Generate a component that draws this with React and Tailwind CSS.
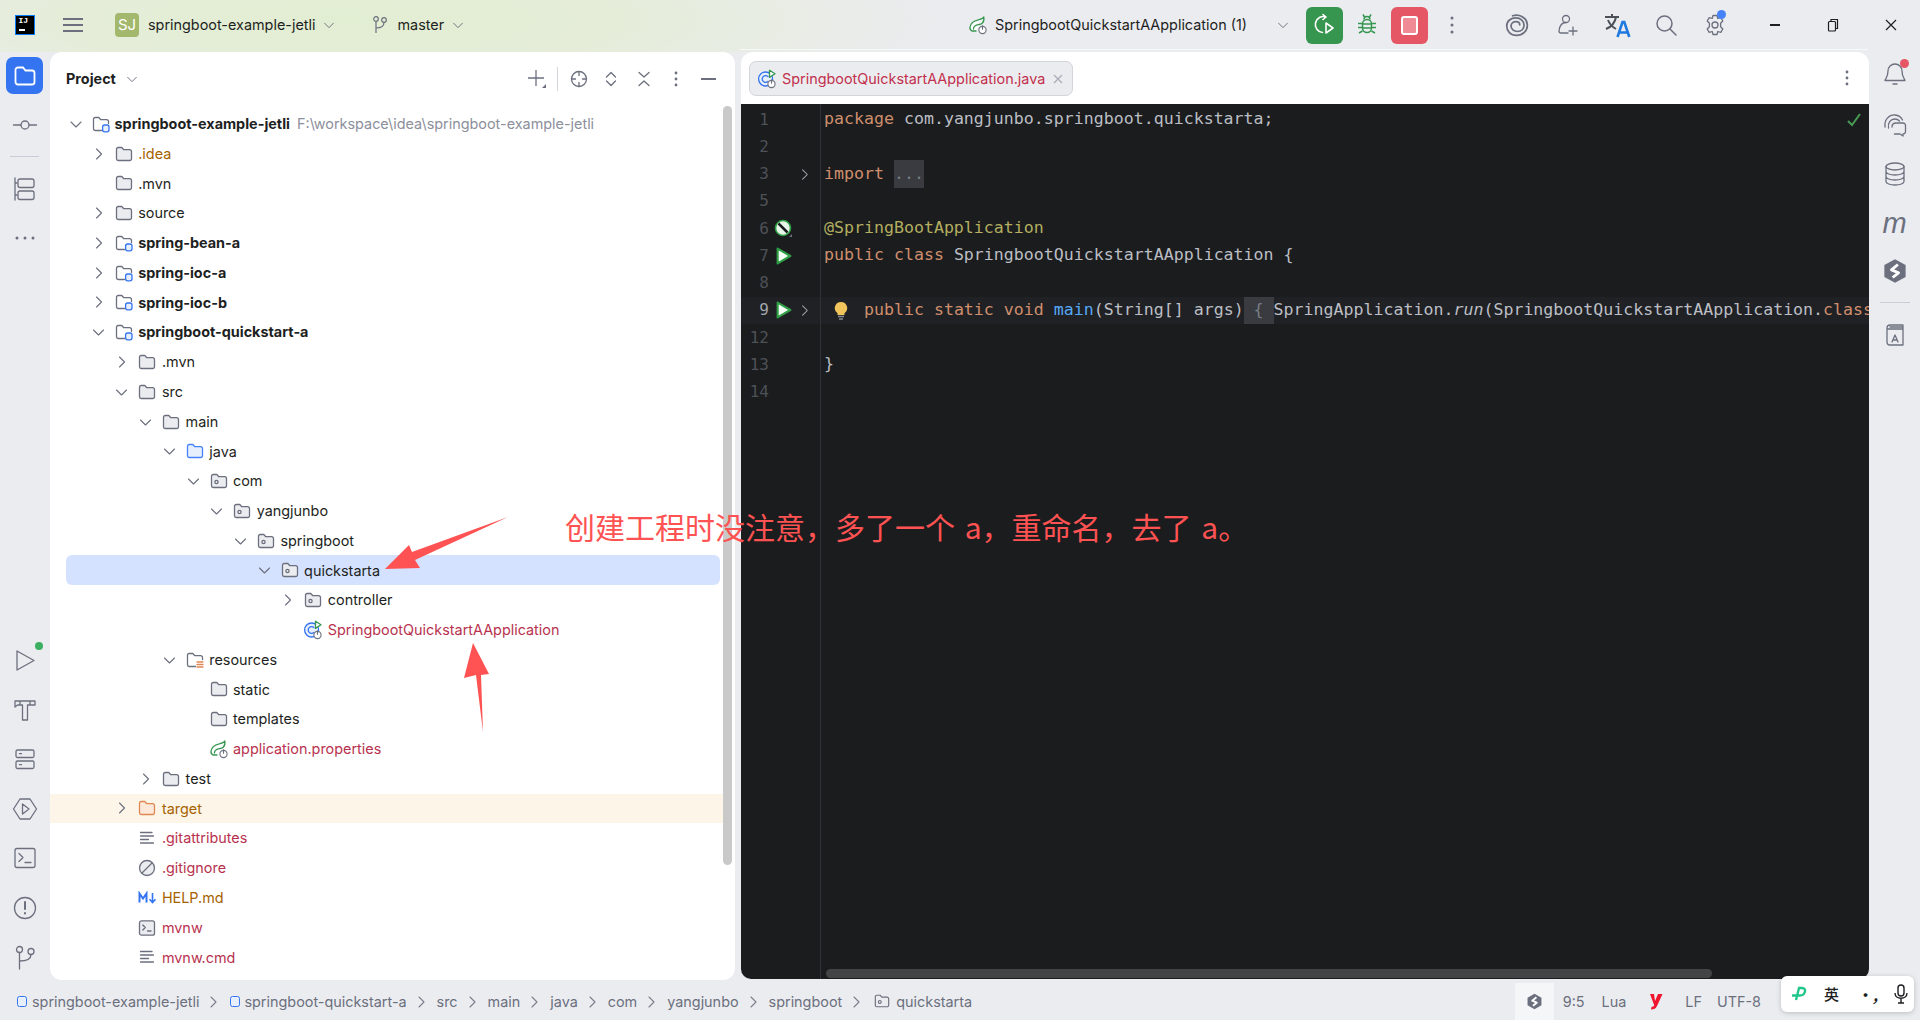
import React from 'react';

const G = '#6c707e';
const Svg = ({ s = 20, vb = 20, children, className = '', stroke = G, sw = 1.3 }) => (
  <svg width={s} height={s} viewBox={`0 0 ${vb} ${vb}`} fill="none" stroke={stroke} strokeWidth={sw} strokeLinecap="round" strokeLinejoin="round" className={`shrink-0 ${className}`}>{children}</svg>
);

const folderD = 'M1.5 4.2A1.7 1.7 0 0 1 3.2 2.5h3.6l2 2.2h5.9a1.8 1.8 0 0 1 1.8 1.8v7.2a1.8 1.8 0 0 1-1.8 1.8H3.2a1.7 1.7 0 0 1-1.7-1.7z';
const Folder = ({ kind }) => {
  if (kind === 'target') return <Svg s={18} vb={18} stroke="#e08855"><path d={folderD} fill="#fde9d9" /></Svg>;
  if (kind === 'module') return (
    <Svg s={18} vb={18}><path d="M9.5 15.5H3.2a1.7 1.7 0 0 1-1.7-1.7V4.2A1.7 1.7 0 0 1 3.2 2.5h3.6l2 2.2h5.9a1.8 1.8 0 0 1 1.8 1.8v2" fill="#fff" /><rect x="10.6" y="10" width="6.4" height="6.8" rx="2" stroke="#3574f0" fill="#e7effd" /></Svg>
  );
  if (kind === 'res') return (
    <Svg s={18} vb={18}><path d="M9.5 15.5H3.2a1.7 1.7 0 0 1-1.7-1.7V4.2A1.7 1.7 0 0 1 3.2 2.5h3.6l2 2.2h5.9a1.8 1.8 0 0 1 1.8 1.8v2" fill="#fff" /><path d="M11 11h6M11 13.5h6M11 16h6" stroke="#e08855" /></Svg>
  );
  if (kind === 'src') return <Svg s={18} vb={18} stroke="#4682fa"><path d={folderD} fill="#e7effd" /></Svg>;
  if (kind === 'pkg') return <Svg s={18} vb={18}><path d={folderD} fill="#ebecf0" /><circle cx="6.5" cy="10" r="1.6" /></Svg>;
  return <Svg s={18} vb={18}><path d={folderD} fill="#ebecf0" /></Svg>;
};

const Power = ({ x, y }) => (
  <g stroke={G} strokeWidth="1.1"><circle cx={x} cy={y} r="3.6" fill="#fff" /><path d={`M${x} ${y - 4.2}v3.4`} /></g>
);
const JavaIcon = () => (
  <Svg s={20} vb={20} stroke="#3574f0">
    <circle cx="8.6" cy="10" r="7" fill="#e7effd" />
    <path d="M11 7.6a3.4 3.4 0 1 0 0 4.8" />
    <path d="M12.5 1.2l5.5 3.6-5.5 3.6z" fill="#fff" stroke="#369650" />
    <Power x={14.5} y={15} />
  </Svg>
);
const SpringIcon = () => (
  <Svg s={20} vb={20} stroke="#369650">
    <path d="M15.8 2c.5 3-.2 5-1.6 6.3-1.8 1.7-5 1-7 2.4-1.2.9-1.8 2-1.8 3.3M15.8 2c-.7 1.7-3 2.2-5.5 2.9C6 6 2.4 8.600 2 12.200c-.2 1.500.5 3 2 3.800h4" fill="#fff" />
    <Power x={14.5} y={15} />
  </Svg>
);
const Lines = () => (
  <Svg s={18} vb={18}><path d="M2.500 3.500h11.500M2.500 7h13M2.500 10.500h8M2.500 14h13" /></Svg>
);
const Ignore = () => (
  <Svg s={18} vb={18}><circle cx="9" cy="9" r="7.500" fill="#ebecf0" /><path d="M4 14L14 4" /></Svg>
);
const Md = () => (
  <svg width="19" height="14" viewBox="0 0 19 14" className="shrink-0" fill="none">
    <path d="M1.500 11.500v-9l3.500 5 3.500-5v9" stroke="#3574f0" strokeWidth="2" />
    <path d="M14.500 2v9M11.500 8.200l3 3.300 3-3.300" stroke="#3574f0" strokeWidth="1.600" />
  </svg>
);
const Term = () => (
  <Svg s={18} vb={18}><rect x="1.500" y="1.800" width="15" height="14.400" rx="2" fill="#ebecf0" /><path d="M4.800 6l2.500 2.500-2.500 2.500M9.500 12h3.500" /></Svg>
);
const ChevR = ({ s = 16, c = G }) => <Svg s={s} vb={16} stroke={c} sw={1.1}><path d="M6 3l5 5-5 5" /></Svg>;
const ChevD = ({ s = 16, c = G }) => <Svg s={s} vb={16} stroke={c} sw={1.1}><path d="M3 6l5 5 5-5" /></Svg>;

const RED = 'text-[#b8324f]';
const BROWN = 'text-[#a66200]';
const tree = [
  { d: 0, open: true, i: 'module', t: 'springboot-example-jetli', b: true, path: 'F:\\workspace\\idea\\springboot-example-jetli' },
  { d: 1, ch: true, i: 'f', t: '.idea', c: BROWN },
  { d: 1, i: 'f', t: '.mvn' },
  { d: 1, ch: true, i: 'f', t: 'source' },
  { d: 1, ch: true, i: 'module', t: 'spring-bean-a', b: true },
  { d: 1, ch: true, i: 'module', t: 'spring-ioc-a', b: true },
  { d: 1, ch: true, i: 'module', t: 'spring-ioc-b', b: true },
  { d: 1, open: true, i: 'module', t: 'springboot-quickstart-a', b: true },
  { d: 2, ch: true, i: 'f', t: '.mvn' },
  { d: 2, open: true, i: 'f', t: 'src' },
  { d: 3, open: true, i: 'f', t: 'main' },
  { d: 4, open: true, i: 'src', t: 'java' },
  { d: 5, open: true, i: 'pkg', t: 'com' },
  { d: 6, open: true, i: 'pkg', t: 'yangjunbo' },
  { d: 7, open: true, i: 'pkg', t: 'springboot' },
  { d: 8, open: true, i: 'pkg', t: 'quickstarta', sel: true },
  { d: 9, ch: true, i: 'pkg', t: 'controller' },
  { d: 9, i: 'java', t: 'SpringbootQuickstartAApplication', c: RED },
  { d: 4, open: true, i: 'res', t: 'resources' },
  { d: 5, i: 'f', t: 'static' },
  { d: 5, i: 'f', t: 'templates' },
  { d: 5, i: 'spring', t: 'application.properties', c: RED },
  { d: 3, ch: true, i: 'f', t: 'test' },
  { d: 2, ch: true, i: 'target', t: 'target', c: BROWN, tgt: true },
  { d: 2, i: 'lines', t: '.gitattributes', c: RED },
  { d: 2, i: 'ignore', t: '.gitignore', c: RED },
  { d: 2, i: 'md', t: 'HELP.md', c: BROWN },
  { d: 2, i: 'term', t: 'mvnw', c: RED },
  { d: 2, i: 'lines', t: 'mvnw.cmd', c: RED },
];

const rowIcon = (i) => {
  if (i === 'java') return <JavaIcon />;
  if (i === 'spring') return <SpringIcon />;
  if (i === 'lines') return <Lines />;
  if (i === 'ignore') return <Ignore />;
  if (i === 'md') return <Md />;
  if (i === 'term') return <Term />;
  return <Folder kind={i} />;
};

const Row = ({ r }) => (
  <div className={`flex items-center h-[29.77px] whitespace-nowrap ${r.tgt ? 'bg-[#fdf6e8] mr-[9px]' : ''} ${r.sel ? 'bg-[#d4e2ff] rounded-md ml-[16px] mr-[15px]' : ''}`}>
    <div className="flex items-center" style={{ paddingLeft: (r.sel ? 2 : 18) + r.d * 23.7 }}>
      <span className={`w-4 h-4 flex items-center justify-center ${r.d ? '-translate-x-[1.5px]' : ''}`}>
        {r.open ? <ChevD /> : r.ch ? <ChevR /> : null}
      </span>
      <span className={`w-[19px] ml-[7.5px] flex items-center justify-center ${r.d ? '-translate-x-[1px]' : ''}`}>{rowIcon(r.i)}</span>
      <span className={`ml-[4px] ${r.b ? 'font-bold' : ''} ${r.c || 'text-[#1e1f22]'}`}>{r.t}</span>
      {r.path && <span className="ml-[7px] text-[#8c8f9c]">{r.path}</span>}
    </div>
  </div>
);

const Mono = "[font-family:'DejaVu_Sans_Mono',monospace]";
const K = ({ children }) => <span className="text-[#cf8e6d]">{children}</span>;

const RunMark = () => (
  <svg width="16" height="18" viewBox="0 0 15 17" className="shrink-0"><path d="M1.500 1.500L13.500 8.500L1.500 15.500Z" fill="#f4fff6" stroke="#2f9e44" strokeWidth="2" strokeLinejoin="round" /></svg>
);
const BeanMark = () => (
  <svg width="20" height="20" viewBox="0 0 20 20" className="shrink-0">
    <circle cx="9" cy="9" r="7.500" fill="#e8f5e9" stroke="#2f9e44" strokeWidth="1.600" />
    <path d="M4.500 4.500l9 9" stroke="#1a1c1e" strokeWidth="2.500" />
    <path d="M18 15v3h-3z" fill="#6c707e" />
  </svg>
);

const CodeLine = ({ n, active, mark, fold, children }) => (
  <div className={`flex h-[27.25px] items-stretch ${active ? 'bg-[#1f2124]' : ''}`}>
    <div className={`w-[80px] flex items-center border-r border-[#2f3236] shrink-0 ${active ? 'text-[#a1a3ab]' : 'text-[#4e5157]'}`}>
      <span className="w-[28px] text-right text-[16px]">{n}</span>
      <span className="w-[24px] ml-[3px] flex items-center justify-center">
        {mark === 'run' && <RunMark />}
        {mark === 'bean' && <BeanMark />}
      </span>
      {fold && <span className="flex items-center ml-[1px]"><ChevR s={15} c="#a8abb0" /></span>}
    </div>
    <div className="pl-[3px] flex items-center whitespace-pre text-[#bcbec4] min-w-0">{children}</div>
  </div>
);

const RailBtn = ({ children, className = '' }) => (
  <div className={`w-[50px] flex items-center justify-center shrink-0 ${className}`}>{children}</div>
);

const Crumb = ({ children, icon, first }) => (
  <>
    {!first && <span className="mx-[6px] flex items-center"><ChevR s={16} c="#7a7e8a" /></span>}
    <span className="flex items-center whitespace-nowrap">{icon}{children}</span>
  </>
);
const Sq = () => <span className="w-[10px] h-[11px] rounded-[2.500px] border-[1.500px] border-[#3574f0] bg-[#e7effd] mr-[5px] ml-[3px] inline-block" />;

const Hex = ({ s = 22 }) => (
  <svg width={s} height={s} viewBox="0 0 22 22" className="shrink-0">
    <path d="M11 1l9 5v10l-9 5-9-5V6z" fill="#6c707e" />
    <path d="M13.500 5.500L8 10l6 2.500-5 4" fill="none" stroke="#fff" strokeWidth="2.400" strokeLinejoin="round" />
  </svg>
);

export default function App() {
  return (
    <div className="relative w-[1920px] h-[1020px] overflow-hidden bg-[#ebecf0] flex flex-col text-[14.400px] text-[#1e1f22] [font-family:Inter,'Noto_Sans_CJK_SC',sans-serif]">
      {/* Title bar */}
      <header className="relative h-[52px] shrink-0 flex items-center bg-[radial-gradient(ellipse_620px_110px_at_340px_20px,#e2eed2_0%,#e5edd9_45%,#ebecf0_100%)] pb-[2px]">
        <div className="ml-[15px] w-[20px] h-[20px] bg-black border-[1px] border-[#087cfa] relative flex flex-col items-start pl-[2.500px] text-white shrink-0">
          <span className="text-[8px] leading-[10px] font-bold [font-family:'Liberation_Mono',monospace]">IJ</span>
          <span className="w-[6px] h-[1.500px] bg-white mt-[3px]" />
        </div>
        <svg width="20" height="20" viewBox="0 0 20 20" className="ml-[28px] shrink-0" fill="none" stroke={G} strokeWidth="1.800"><path d="M0 4h20M0 10h20M0 16h20" /></svg>
        <div className="ml-[32px] w-[24px] h-[24px] rounded-[4px] bg-[#a3b86c] text-white text-[15px] flex items-center justify-center shrink-0">SJ</div>
        <span className="ml-[9px]">springboot-example-jetli</span>
        <span className="ml-[7px] flex"><ChevD s={14} /></span>
        <svg width="16" height="20" viewBox="0 0 16 20" className="ml-[36px] shrink-0" fill="none" stroke={G} strokeWidth="1.200"><circle cx="4" cy="4" r="2.300" /><circle cx="12" cy="5" r="2.300" /><path d="M4 6.500V18M4 13c5 0 8-1.500 8-5.500" /></svg>
        <span className="ml-[9px]">master</span>
        <span className="ml-[7px] flex"><ChevD s={14} /></span>

        <div className="ml-auto flex items-center">
          <SpringIcon />
          <span className="ml-[7px] w-[281px] whitespace-nowrap">SpringbootQuickstartAApplication (1)</span>
          <ChevD s={14} />
          <div className="ml-[16px] w-[37px] h-[37px] rounded-[6px] bg-[#369650] flex items-center justify-center">
            <svg width="24" height="24" viewBox="0 0 24 24" fill="none" stroke="#fff" strokeWidth="1.600" strokeLinejoin="round" strokeLinecap="round"><path d="M13 4a8 8 0 1 0-3.500 15.500M10 1.500L13 4l-3 2.500" /><path d="M13 10l7 5-7 5z" /></svg>
          </div>
          <div className="w-[48px] flex justify-center">
            <svg width="22" height="24" viewBox="0 0 22 24" fill="none" stroke="#369650" strokeWidth="1.500"><rect x="6.500" y="6.500" width="9" height="13" rx="4.500" /><path d="M8 6.500a3 3 0 0 1 6 0M7 1.500L8.500 4M15 1.500L13.500 4M6.500 10.500H2M6.500 14.500H2M6.500 18l-3.500 2M15.500 10.500H20M15.500 14.500H20M15.500 18l3.500 2M6.500 11h9M6.500 15h9" /></svg>
          </div>
          <div className="w-[37px] h-[37px] rounded-[6px] bg-[#e55765] flex items-center justify-center">
            <div className="w-[17px] h-[19px] rounded-[3px] border-[2px] border-white bg-[#f08b95]" />
          </div>
          <div className="w-[48px] flex justify-center">
            <svg width="4" height="18" viewBox="0 0 4 18" fill={G}><circle cx="2" cy="2" r="1.500" /><circle cx="2" cy="9" r="1.500" /><circle cx="2" cy="16" r="1.500" /></svg>
          </div>
          <div className="w-[41px] ml-[20px] mr-[5px] flex justify-center">
            <Svg s={26} vb={24} sw={1.600}><path d="M8 3.500C14 1.500 21 5 21.500 11.500c.5 6-4.500 10-10 10-5.500 0-9-4-9-8.500C2.500 8 6.500 5.500 11 5.500c4.500 0 7.500 3 7.500 6.500s-2.500 6-6 6-6-2.200-6-5c0-2.500 2-4.200 4.500-4.200 2 0 3.500 1.300 3.500 3" /></Svg>
          </div>
          <div className="w-[50px] flex justify-center">
            <Svg s={24} vb={24}><circle cx="11" cy="6" r="3.500" /><path d="M11 9.500c-4.500 0-6.500 4-7 8.500 0 1.500 1 2 2 2h7M18 14v8M14 18h8" /></Svg>
          </div>
          <div className="w-[49px] flex justify-center">
            <svg width="28" height="28" viewBox="0 0 28 28" fill="none"><path d="M2 6h14M9 3v3M13 6c-1 6-5 10-10 12M5 9c1.500 4 4.500 7 8 9" stroke="#4c5059" strokeWidth="2" /><path d="M14.500 26l5-15h1.800l5 15M16.300 21.500h8.500" stroke="#1f7ae0" strokeWidth="2.600" /></svg>
          </div>
          <div className="w-[50px] flex justify-center">
            <Svg s={24} vb={24} sw={1.500}><circle cx="10.500" cy="10.500" r="7.500" /><path d="M16 16l6 6" /></Svg>
          </div>
          <div className="w-[48px] flex justify-center relative">
            <Svg s={24} vb={24}><path d="M10 2.500h4l.8 3 3-.9 2 3.400-2.200 2.200 0 3.600 2.200 2.200-2 3.400-3-.9-.8 3h-4l-.8-3-3 .9-2-3.400 2.200-2.200 0-3.600L4.200 8l2-3.400 3 .9z" /><circle cx="12" cy="12" r="3" /></Svg>
            <span className="absolute top-[-3px] left-[26px] w-[9px] h-[9px] rounded-full bg-[#4682fa]" />
          </div>
          <div className="w-[58px] ml-[7px] flex justify-center"><span className="w-[10px] h-[1.500px] bg-[#1e1f22]" /></div>
          <div className="w-[58px] flex justify-center">
            <svg width="12" height="14" viewBox="0 0 12 14" fill="none" stroke="#1e1f22" strokeWidth="1.200"><rect x="1.500" y="3.500" width="7" height="9.500" rx="1" /><path d="M4 3.500V1.500h6.500v9H8.500" /></svg>
          </div>
          <div className="w-[58px] flex justify-center">
            <svg width="12" height="12" viewBox="0 0 12 12" fill="none" stroke="#1e1f22" strokeWidth="1.200"><path d="M1 1l10 10M11 1L1 11" /></svg>
          </div>
        </div>
        <span className="absolute bottom-[2px] left-[740px] w-[1128px] h-px bg-[#f7f8fa]" />
      </header>

      {/* Middle */}
      <div className="flex-1 flex min-h-0">
        {/* Left rail */}
        <nav className="w-[50px] shrink-0 flex flex-col">
          <div className="mt-[5px] ml-[6px] w-[37px] h-[37px] rounded-[7px] bg-[#3574f0] flex items-center justify-center">
            <svg width="24" height="24" viewBox="0 0 24 24" fill="none" stroke="#fff" strokeWidth="1.800"><path d="M2.500 6A2.500 2.500 0 0 1 5 3.500h5l2.500 3H19A2.500 2.500 0 0 1 21.500 9v9a2.500 2.500 0 0 1-2.500 2.500H5A2.500 2.500 0 0 1 2.500 18z" /></svg>
          </div>
          <RailBtn className="h-[24px] mt-[19px]"><Svg s={26} vb={26}><circle cx="13" cy="13" r="4" /><path d="M1.500 13H9M17 13h7.500" /></Svg></RailBtn>
          <div className="h-px bg-[#c9ccd6] mx-[10px] mt-[19px] w-[29px]" />
          <RailBtn className="h-[28px] mt-[18px]"><Svg s={26} vb={26}><path d="M3 2v22M3 7h2M3 19h2" /><rect x="6" y="3" width="16" height="8.500" rx="2" /><rect x="6" y="15" width="16" height="8.500" rx="2" /></Svg></RailBtn>
          <RailBtn className="h-[8px] mt-[31px]"><svg width="20" height="4" viewBox="0 0 20 4" fill={G}><circle cx="2" cy="2" r="1.500" /><circle cx="10" cy="2" r="1.500" /><circle cx="18" cy="2" r="1.500" /></svg></RailBtn>

          <div className="mt-auto flex flex-col items-center pb-[10px] gap-[23.500px]">
            <div className="relative flex"><Svg s={26} vb={26}><path d="M5 4l17 9.500L5 23z" /></Svg><span className="absolute top-[-5px] right-[-5px] w-[8px] h-[8px] rounded-full bg-[#3cae5f]" /></div>
            <Svg s={26} vb={26}><path d="M3 4h20v4H15.500v15h-5V8H5.500L3 10zM8 4v4M18 4v4" /></Svg>
            <Svg s={26} vb={26}><rect x="4" y="4" width="18" height="7.500" rx="1.500" /><rect x="4" y="15" width="18" height="7.500" rx="1.500" /><path d="M7.500 7.700h2M7.500 18.700h2" /></Svg>
            <Svg s={26} vb={26}><path d="M8 3h10l6.500 10L18 23H8L1.500 13z" /><path d="M10.500 8l6.500 5-6.500 5z" /></Svg>
            <Svg s={26} vb={26}><rect x="3" y="3.500" width="20" height="19" rx="2" /><path d="M7 8.500l4 4-4 4M13 17.500h6" /></Svg>
            <Svg s={26} vb={26}><circle cx="13" cy="13" r="10.500" /><path d="M13 7v7M13 18v.5" strokeWidth="2" /></Svg>
            <Svg s={26} vb={26}><circle cx="7.500" cy="5.500" r="3" /><circle cx="19" cy="7.500" r="3" /><path d="M7.500 8.500V25M7.500 17c7 0 11.500-2 11.500-6.500" /></Svg>
          </div>
        </nav>

        {/* Project panel */}
        <section className="w-[685px] shrink-0 bg-white rounded-[12px] flex flex-col relative overflow-hidden">
          <div className="h-[52px] flex items-center shrink-0 pt-[2px]">
            <span className="ml-[16px] font-bold">Project</span>
            <span className="ml-[9px] flex"><ChevD s={14} /></span>
            <div className="ml-auto flex items-center pr-[19px]">
              <svg width="20" height="20" viewBox="0 0 20 20" fill="none" stroke={G} strokeWidth="1.300" className="mr-[10px]"><path d="M9 1v16M1 9h16" /><path d="M19 15v4h-4z" fill={G} stroke="none" /></svg>
              <span className="w-px h-[24px] bg-[#d3d5db] mr-[12px]" />
              <Svg s={18} vb={18} className="mr-[15px]"><circle cx="9" cy="9" r="7.500" /><path d="M9 1.500v4M9 12.500v4M1.500 9h4M12.500 9h4" /></Svg>
              <Svg s={16} vb={16} className="mr-[17px]"><path d="M3.500 6L8 1.500 12.500 6M3.500 10L8 14.500 12.500 10" /></Svg>
              <Svg s={16} vb={16} className="mr-[22px]"><path d="M3 1.500L8 6l5-4.500M3 14.500L8 10l5 4.500" /></Svg>
              <svg width="4" height="16" viewBox="0 0 4 16" fill={G} className="mr-[23px]"><circle cx="2" cy="2" r="1.400" /><circle cx="2" cy="8" r="1.400" /><circle cx="2" cy="14" r="1.400" /></svg>
              <span className="w-[15px] h-[1.500px] bg-[#6c707e]" />
            </div>
          </div>
          <div className="pt-[5px] flex-1 min-h-0">
            {tree.map((r, i) => <Row key={i} r={r} />)}
          </div>
          <div className="absolute right-[3px] top-[54px] w-[9px] h-[759px] rounded-full bg-[#c9c9c9]" />
        </section>

        {/* Editor */}
        <section className="ml-[6px] w-[1128px] shrink-0 flex flex-col relative mb-[1px]">
          <div className="h-[52px] shrink-0 bg-white rounded-t-[12px] flex items-center relative">
            <div className="ml-[8px] h-[35px] w-[324px] rounded-[7px] bg-[#ebecf0] border border-[#d3d5db] flex items-center pl-[7px] pt-[1px]">
              <JavaIcon />
              <span className="ml-[5px] text-[#c2304d]">SpringbootQuickstartAApplication.java</span>
              <svg width="12" height="12" viewBox="0 0 12 12" fill="none" stroke="#a8abb5" strokeWidth="1.200" className="ml-auto mr-[8px]"><path d="M2 2l8 8M10 2l-8 8" /></svg>
            </div>
            <svg width="4" height="16" viewBox="0 0 4 16" fill={G} className="ml-auto mr-[20px]"><circle cx="2" cy="2" r="1.400" /><circle cx="2" cy="8" r="1.400" /><circle cx="2" cy="14" r="1.400" /></svg>
          </div>
          <div className={`flex-1 bg-[#1a1c1e] rounded-b-[10px] relative overflow-hidden ${Mono} text-[16.600px] min-h-0`}>
            <div className="absolute inset-y-0 left-[79px] w-px bg-[#2f3236]" />
            <div className="relative pt-[2px]">
              <CodeLine n="1"><span><K>package</K> com.yangjunbo.springboot.quickstarta;</span></CodeLine>
              <CodeLine n="2" />
              <CodeLine n="3" fold><span className="flex items-center"><K>import</K><span className="ml-[10px] bg-[#393b40] text-[#7a7e85] w-[30px] h-[28px] leading-[28px] inline-block">...</span></span></CodeLine>
              <CodeLine n="5" />
              <CodeLine n="6" mark="bean"><span className="text-[#b3ae60]">@SpringBootApplication</span></CodeLine>
              <CodeLine n="7" mark="run"><span><K>public class</K> SpringbootQuickstartAApplication {'{'}</span></CodeLine>
              <CodeLine n="8" />
              <CodeLine n="9" mark="run" active fold>
                <span className="flex items-center h-full">
                  <span>{'    '}<K>public static void</K> <span className="text-[#56a8f5]">main</span>(String[] args)</span>
                  <span className="bg-[#393b40] text-[#7a7e85] h-full flex items-center">{' { '}</span>
                  <span>SpringApplication.<i>run</i>(SpringbootQuickstartAApplication.<K>class</K></span>
                </span>
              </CodeLine>
              <CodeLine n="12" />
              <CodeLine n="13"><span>{'}'}</span></CodeLine>
              <CodeLine n="14" />
            </div>
            {/* bulb over the code */}
            <svg width="14" height="20" viewBox="0 0 14 20" className="absolute left-[93px] top-[197px]"><path d="M7 1a6.200 6.200 0 0 1 3.500 11.300V14h-7v-1.700A6.200 6.200 0 0 1 7 1z" fill="#f2c55c" /><path d="M4 15.500h6M5 18h4" stroke="#868a91" strokeWidth="1.500" /></svg>
            <svg width="16" height="14" viewBox="0 0 16 14" className="absolute right-[7px] top-[9px]" fill="none" stroke="#499c54" strokeWidth="2"><path d="M2 8l4 4 8-11" /></svg>
            <div className="absolute left-[85px] bottom-[1px] w-[886px] h-[9px] rounded-full bg-[#434446]" />
          </div>
        </section>

        {/* Right rail */}
        <aside className="flex-1 flex flex-col items-center">
          <div className="relative mt-[9px] flex">
            <Svg s={26} vb={26}><path d="M13 3a7 7 0 0 1 7 7c0 6 2.500 8 3 9.500H3c.5-1.500 3-3.500 3-9.500a7 7 0 0 1 7-7zM11 23h4" /></Svg>
            <span className="absolute top-[-2px] right-[-1px] w-[9px] h-[9px] rounded-full bg-[#e55765]" />
          </div>
          <Svg s={26} vb={26} className="mt-[25px]"><path d="M3 15C2 8 7 2.500 13 3c3.500.3 6 2 7.500 5M6.500 16c-1-5 2-9 6.500-9 2 0 3.500 1 4.500 2" /><path d="M10 15c0-2.500 1.500-4 4-4h7a2.500 2.500 0 0 1 2.500 2.500v6a2.500 2.500 0 0 1-2.500 2.500v2l-3-2h-5.500" /></Svg>
          <Svg s={26} vb={26} className="mt-[23px]"><ellipse cx="13" cy="5.500" rx="9" ry="3.500" /><path d="M4 5.500v15c0 2 4 3.500 9 3.500s9-1.500 9-3.500v-15M4 10.500c0 2 4 3.500 9 3.500s9-1.500 9-3.500M4 15.500c0 2 4 3.500 9 3.500s9-1.500 9-3.500" /></Svg>
          <span className="mt-[21px] h-[30px] leading-[30px] text-[29px] italic text-[#6c707e] [font-family:'Liberation_Sans',sans-serif]">m</span>
          <span className="mt-[20px] flex"><Hex s={26} /></span>
          <span className="mt-[18px] h-px w-[30px] bg-[#c9ccd6]" />
          <Svg s={26} vb={26} className="mt-[19px]"><path d="M5 6a3 3 0 0 1 3-3h13v20H8a3 3 0 0 1-3-3zM5 7h16M8 5h13" /><path d="M10 20l3-7 3 7M11 18h4" /></Svg>
        </aside>
      </div>

      {/* Status bar */}
      <footer className="h-[40px] shrink-0 flex items-center text-[#6c707e] pl-[14px] pt-[3px] relative whitespace-nowrap">
        <Crumb first icon={<Sq />}>springboot-example-jetli</Crumb>
        <Crumb icon={<Sq />}><span className="-ml-[1px]">springboot-quickstart-a</span></Crumb>
        <Crumb><span className="ml-[2px]">src</span></Crumb>
        <Crumb><span className="ml-[2px]">main</span></Crumb>
        <Crumb><span className="ml-[2px]">java</span></Crumb>
        <Crumb><span className="ml-[2px]">com</span></Crumb>
        <Crumb><span className="ml-[2px]">yangjunbo</span></Crumb>
        <Crumb><span className="ml-[2px]">springboot</span></Crumb>
        <Crumb icon={<span className="mr-[6px] ml-[4px] flex"><Svg s={16} vb={18}><path d={folderD} fill="#ebecf0" /><circle cx="6.500" cy="10" r="1.600" /></Svg></span>}>quickstarta</Crumb>

        <div className="ml-auto flex items-center h-full pr-[6px]">
          <div className="w-[39px] h-full bg-[#f5f6f8] flex items-center justify-center"><Hex s={17} /></div>
          <span className="ml-[9px]">9:5</span>
          <span className="ml-[17px]">Lua</span>
          <svg width="14" height="17" viewBox="0 0 14 17" className="ml-[23px] shrink-0 mr-[1px]" fill="#f0142f"><path d="M1 1h4l1 7 3-7h4.500L8 13c-1 2.500-3 3.500-6 3.500l.6-2.800c1.400 0 2-.4 2.600-1.500z" /></svg>
          <span className="ml-[21px]">LF</span>
          <span className="ml-[15px]">UTF-8</span>
          <span className="ml-[21px] w-[132px]">[</span>
        </div>
      </footer>

      {/* IME floating bar */}
      <div className="absolute left-[1781px] top-[976px] w-[133px] h-[36px] rounded-[6px] bg-white shadow-[0_1px_5px_rgba(0,0,0,0.2)] flex items-center text-[#1e1f22] text-[15px] [font-family:'Noto_Sans_CJK_SC',sans-serif]">
        <svg width="18" height="16" viewBox="0 0 18 16" className="ml-[10px]" fill="none" stroke="#1fc88a" strokeWidth="2.400"><path d="M1 9.500h8c5 0 7.500-7.500 2-7.500H8L5 14" /></svg>
        <span className="ml-[15px] font-medium">英</span>
        <span className="ml-[19px] w-[14px] text-center font-bold leading-none">·<span className="italic">,</span></span>
        <svg width="18" height="20" viewBox="0 0 18 20" className="ml-[20px]" fill="none" stroke="#1e1f22" strokeWidth="1.400"><rect x="6" y="1" width="6" height="11" rx="3" /><path d="M3 9c0 7 12 7 12 0M9 15v4M6 19h6" /></svg>
      </div>

      {/* Annotation */}
      <div className="absolute left-[565px] top-[503.500px] text-[30px] leading-[44px] text-[#ff5252] whitespace-pre [word-spacing:3px] [font-family:'Noto_Sans_CJK_SC',sans-serif]">创建工程时没注意，多了一个 a，重命名，去了 a。</div>
      <svg width="1920" height="1020" className="absolute left-0 top-0 pointer-events-none">
        <polygon points="385,569 409,545 412,552 508,517 415,560 420,568" fill="#ff5252" />
        <polygon points="473,643 464,678 476,675 483,732 481,675 489,674" fill="#ff5252" />
      </svg>
    </div>
  );
}
